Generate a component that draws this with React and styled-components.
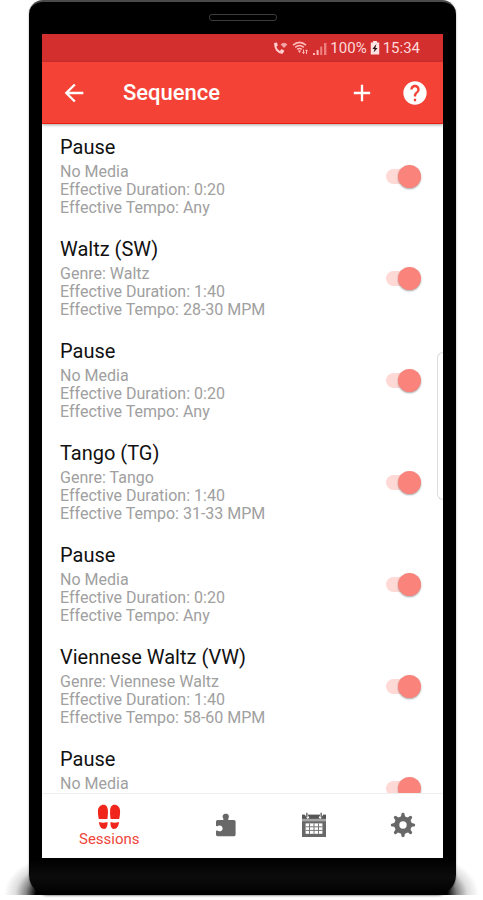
import React, { useState } from 'react';
import styled, { createGlobalStyle } from 'styled-components';
import { MdAdd, MdArrowBack, MdHelp } from 'react-icons/md';

const sequence = [
  { id: 1, title: 'Pause', media: 'No Media', duration: '0:20', tempo: 'Any' },
  { id: 2, title: 'Waltz (SW)', media: 'Genre: Waltz', duration: '1:40', tempo: '28-30 MPM' },
  { id: 3, title: 'Pause', media: 'No Media', duration: '0:20', tempo: 'Any' },
  { id: 4, title: 'Tango (TG)', media: 'Genre: Tango', duration: '1:40', tempo: '31-33 MPM' },
  { id: 5, title: 'Pause', media: 'No Media', duration: '0:20', tempo: 'Any' },
  { id: 6, title: 'Viennese Waltz (VW)', media: 'Genre: Viennese Waltz', duration: '1:40', tempo: '58-60 MPM' },
  { id: 7, title: 'Pause', media: 'No Media', duration: '0:20', tempo: 'Any' },
];

const CallIcon = () => (
  <svg width="15" height="14" viewBox="0 0 15 14" fill="none" stroke="#ffd0d0">
    <path d="M2.4 2.5C1.6 7.5 4.8 11.6 9.6 12" strokeWidth="2" />
    <path d="M1 2L4 1.6L4.8 4.8L2.4 6ZM7 9.8L8.6 8L11.4 9.8L9.8 12.6Z" fill="#ffd0d0" stroke="none" />
    <path d="M7.6 3.4Q11 0 14.4 3.4L11 7Z" fill="#f3a3a3" stroke="none" />
  </svg>
);

const WifiIcon = () => (
  <svg width="17" height="14" viewBox="0 0 17 14" fill="none" stroke="#ffb9b9" strokeWidth="1.6">
    <path d="M1 4.2Q7.5 -1.6 14 4.2" />
    <path d="M3.2 6.4Q7.5 2.6 11.8 6.4" />
    <path d="M5.2 8.4Q7.5 6.6 9.8 8.4" />
    <path d="M5.8 9.4h3.4L7.5 12z" fill="#ffb9b9" stroke="none" />
    <path d="M11.5 8.5v4M10.4 11.2l1.1 1.4 1.1-1.4M14.5 13V9M13.4 10.2l1.1-1.4 1.1 1.4" strokeWidth="1" />
  </svg>
);

const SignalIcon = () => (
  <svg width="14" height="13" viewBox="0 0 14 13">
    <path d="M0 11h2v2H0zM3.6 8h2v5h-2z" fill="#ffb9b9" />
    <path d="M7.2 4.5h2V13h-2zM11 1h2.4v12H11z" fill="#ee8080" />
  </svg>
);

const BatteryIcon = () => (
  <svg width="10" height="14" viewBox="0 0 10 14">
    <path d="M3 0h4v1.6h2.2v12H0.8v-12H3z" fill="#ffe3e3" />
    <path d="M6.4 3L2.4 8h2.2l-1 3.6L7.6 7H5.4z" fill="#2b1414" />
  </svg>
);

const StepsIcon = () => (
  <svg width="24" height="26" viewBox="0 0 24 26" fill="#f0251b">
    <path d="M6.6 0.8C8.9 0.6 10.8 3 10.9 6.6C11 9.6 10.8 12 10.4 15H1.8C1.2 12.4 0.9 10 0.9 7.2C0.9 3.4 3.6 0.8 6.6 0.8Z" />
    <path d="M2 18Q6.4 19.6 10.5 18C10.8 22 9.4 25 7.2 25C4.2 25 2.2 22.2 2 18Z" />
    <path d="M17.4 0.8C15.1 0.6 13.2 3 13.1 6.6C13 9.6 13.2 12 13.6 15H22.2C22.8 12.4 23.1 10 23.1 7.2C23.1 3.4 20.4 0.8 17.4 0.8Z" />
    <path d="M22 18Q17.6 19.6 13.5 18C13.2 22 14.6 25 16.8 25C19.8 25 21.8 22.2 22 18Z" />
  </svg>
);

const PuzzleIcon = () => (
  <svg width="22" height="24" viewBox="0 0 22 24" fill="#686868">
    <path d="M2.6 7H7.8C8.6 7 8.6 6.2 8.2 5.4C6.8 2.8 8.4 0.8 10.8 0.8S14.8 2.8 13.4 5.4C13 6.2 13 7 13.8 7H19Q20.6 7 20.6 8.6V21.6Q20.6 23.2 19 23.2H2.6Q1 23.2 1 21.6V18.2C1 17.2 1.8 17.2 2.8 17.8C5.4 19.2 7.6 17.6 7.6 15.4S5.4 11.8 2.8 13C1.8 13.6 1 13.4 1 12.6V8.6Q1 7 2.6 7Z" />
  </svg>
);

const CalendarIcon = () => (
  <svg width="26" height="26" viewBox="0 0 26 26">
    <path d="M1 2.6H25V8H1Z" fill="#555" />
    <path d="M4.4 1.4l3 5M21.6 1.4l-3 5" stroke="#fff" strokeWidth="2.2" />
    <path d="M5.8 0.8v4.4M20.2 0.8v4.4" stroke="#686868" strokeWidth="1.4" />
    <path d="M1 6.8H25V9.6H1Z" fill="#a5a5a5" />
    <path d="M1 9.2H25V25H1Z" fill="#686868" />
    <path d="M4.6 11.4H21.4V21.8H4.6Z" fill="#fff" />
    <path d="M8.5 11.4v10.4M13 11.4v10.4M17.5 11.4v10.4M4.6 14.8h16.8M4.6 18.4h16.8" stroke="#777" strokeWidth="1" />
  </svg>
);

const GearIcon = () => (
  <svg width="26" height="26" viewBox="0 0 26 26">
    <circle cx="13" cy="13" r="6.2" fill="none" stroke="#686868" strokeWidth="5" />
    {[0, 45, 90, 135, 180, 225, 270, 315].map((angle) => (
      <path
        key={angle}
        d="M10 5.6Q11.4 4.6 11.4 2.2Q11.4 0.8 13 0.8T14.6 2.2Q14.6 4.6 16 5.6Z"
        fill="#686868"
        transform={`rotate(${angle} 13 13)`}
      />
    ))}
  </svg>
);

const SequenceItem = ({ item }) => {
  const [enabled, setEnabled] = useState(true);

  return (
    <Row>
      <label htmlFor={`item-${item.id}`}>
        <RowTitle>{item.title}</RowTitle>
        <RowLine>{item.media}</RowLine>
        <RowLine>Effective Duration: {item.duration}</RowLine>
        <RowLine>Effective Tempo: {item.tempo}</RowLine>
      </label>
      <Switch
        id={`item-${item.id}`}
        type="checkbox"
        checked={enabled}
        onChange={(e) => setEnabled(e.target.checked)}
      />
    </Row>
  );
};

const App = () => {
  return (
    <>
      <GlobalStyle />
      <Stage>
        <Shadow $side="left" />
        <Shadow $side="right" />
        <Phone>
          <Speaker />
          <Screen>
            <StatusBar>
              <StatusIcons>
                <CallIcon />
                <WifiIcon />
                <SignalIcon />
              </StatusIcons>
              <span>100%</span>
              <BatteryIcon />
              <span>15:34</span>
            </StatusBar>
            <AppBar>
              <IconButton aria-label="Back"><MdArrowBack size={28} /></IconButton>
              <Title>Sequence</Title>
              <IconButton aria-label="Add"><MdAdd size={28} /></IconButton>
              <IconButton aria-label="Help"><MdHelp size={28} /></IconButton>
            </AppBar>
            <List>
              {sequence.map((item) => (
                <SequenceItem key={item.id} item={item} />
              ))}
            </List>
            <BottomNav>
              <NavButton $active>
                <StepsIcon />
                Sessions
              </NavButton>
              <NavButton aria-label="Media"><PuzzleIcon /></NavButton>
              <NavButton aria-label="Calendar"><CalendarIcon /></NavButton>
              <NavButton aria-label="Settings"><GearIcon /></NavButton>
            </BottomNav>
            <EdgeHandle />
          </Screen>
        </Phone>
      </Stage>
    </>
  );
};

export default App;

// Styled components
const GlobalStyle = createGlobalStyle`
  * {
    box-sizing: border-box;
  }
  body {
    margin: 0;
    background: #fff;
    font-family: Roboto, "Liberation Sans", sans-serif;
  }
`;

const Stage = styled.div`
  position: relative;
  display: flex;
  height: 100vh;
  padding: 0 27px 5px 29px;
  overflow: hidden;
`;

const Shadow = styled.div`
  position: absolute;
  bottom: 5px;
  ${({ $side }) => $side}: 4px;
  width: 64px;
  height: 42px;
  background: radial-gradient(farthest-side ellipse at ${({ $side }) => ($side === 'left' ? 'right' : 'left')} bottom,
    #000 50%, #888 66%, #ddd 82%, transparent 100%);
`;

const Phone = styled.div`
  position: relative;
  display: flex;
  flex: 1;
  flex-direction: column;
  min-width: 0;
  padding: 0 13px 37px;
  background: linear-gradient(#000 96%, #0c0c0c 98%, #000);
  border-top: 2px solid #4a4a4a;
  border-radius: 14px 14px 20px 20px;
  box-shadow: 0 1px 2px rgba(0, 0, 0, 0.4);
`;

const Speaker = styled.div`
  flex: none;
  align-self: center;
  width: 68px;
  height: 7px;
  margin: 12px 0 13px;
  border: 1px solid #3c3c3c;
  border-radius: 3px;
`;

const Screen = styled.div`
  position: relative;
  display: flex;
  flex: 1;
  flex-direction: column;
  min-height: 0;
  overflow: hidden;
  background: #fff;
`;

const StatusBar = styled.div`
  display: flex;
  flex: none;
  align-items: center;
  justify-content: flex-end;
  gap: 3px;
  height: 28px;
  padding-right: 23px;
  background: #d32f2f;
  color: #ffd9d9;
  font-size: 15px;
`;

const StatusIcons = styled.div`
  display: flex;
  align-items: center;
  gap: 4px;
`;

const AppBar = styled.header`
  position: relative;
  display: flex;
  flex: none;
  align-items: center;
  gap: 25px;
  height: 62px;
  padding: 0 14px 0 18px;
  background: #f44336;
  border-bottom: 1px solid #e5200f;
  box-shadow: 0 1px 3px rgba(0, 0, 0, 0.35);
  color: #fff;
`;

const Title = styled.h1`
  flex: 1;
  margin: 0;
  padding-left: 10px;
  font-size: 22px;
  font-weight: 500;
`;

const IconButton = styled.button`
  display: flex;
  padding: 0;
  border: 0;
  background: none;
  color: inherit;
`;

const List = styled.ul`
  flex: 1;
  min-height: 0;
  margin: 0;
  padding: 0;
  overflow-y: auto;
  list-style: none;
  scrollbar-width: none;
`;

const Row = styled.li`
  display: flex;
  align-items: center;
  justify-content: space-between;
  padding: 11px 22px 9px 18px;
`;

const RowTitle = styled.div`
  margin-bottom: 4px;
  color: #111;
  font-size: 20px;
  line-height: 24px;
`;

const RowLine = styled.div`
  color: #a0a0a0;
  font-size: 16px;
  line-height: 18px;
`;

const Switch = styled.input`
  appearance: none;
  display: flex;
  align-items: center;
  width: 35px;
  height: 23px;
  margin: 0;

  &::before {
    content: '';
    width: 33px;
    height: 15px;
    border-radius: 8px;
    background: ${({ checked }) => (checked ? '#ffd9d6' : '#ddd')};
  }

  &::after {
    content: '';
    flex: none;
    width: 23px;
    height: 23px;
    margin-left: ${({ checked }) => (checked ? '-21px' : '-33px')};
    border-radius: 50%;
    background: ${({ checked }) => (checked ? '#fa837b' : '#f5f5f5')};
    box-shadow: 0 1px 2px rgba(0, 0, 0, 0.35);
  }
`;

const BottomNav = styled.nav`
  display: flex;
  flex: none;
  align-items: center;
  justify-content: space-between;
  height: 65px;
  padding: 0 27px 2px 37px;
  background: #fff;
  border-top: 1px solid #eee;
`;

const NavButton = styled.button`
  display: flex;
  flex-direction: column;
  align-items: center;
  gap: 1px;
  margin-right: ${({ $active }) => ($active ? '12px' : '0')};
  padding: 0;
  border: 0;
  background: none;
  color: ${({ $active }) => ($active ? '#f0453a' : '#686868')};
  font-family: inherit;
  font-size: 15px;
  line-height: 16px;
`;

const EdgeHandle = styled.div`
  position: absolute;
  top: 318px;
  right: 0;
  width: 6px;
  height: 148px;
  border: 1px solid #ddd;
  border-right: 0;
  border-radius: 6px 0 0 6px;
`;
